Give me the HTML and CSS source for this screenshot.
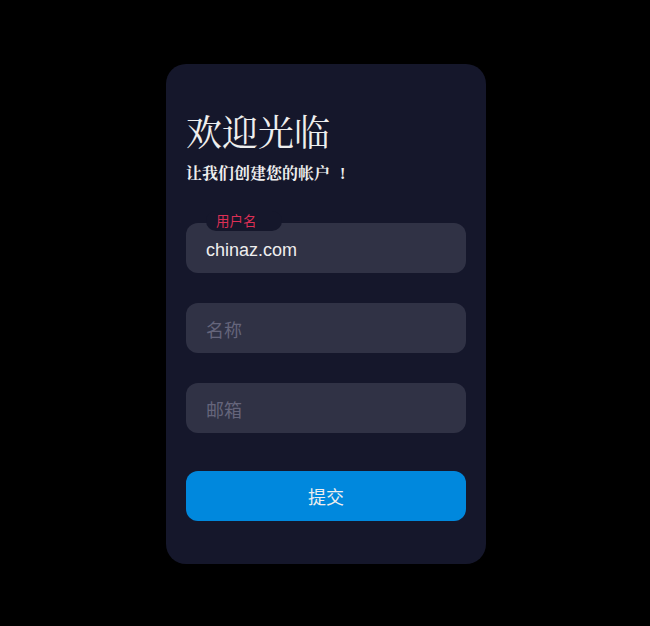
FILE: index.html
```html
<!DOCTYPE html>
<html lang="zh">
<head>
<meta charset="utf-8">
<title>欢迎光临</title>
<link rel="stylesheet" href="styles.css">
</head>
<body>
<div class="form">
  <div class="title">欢迎光临</div>
  <div class="subtitle">让我们创建您的帐户<span class="excl">!</span></div>
  <div class="input-container ic1">
    <input class="input filled" type="text" value="chinaz.com">
    <div class="cut"></div>
    <label class="placeholder raised">用户名</label>
  </div>
  <div class="input-container ic2">
    <input class="input" type="text">
    <label class="placeholder">名称</label>
  </div>
  <div class="input-container ic2">
    <input class="input" type="text">
    <label class="placeholder">邮箱</label>
  </div>
  <button class="submit" type="button">提交</button>
</div>
</body>
</html>
```

FILE: styles.css
```css
html, body {
  margin: 0;
  padding: 0;
}
body {
  background: #000;
  display: flex;
  align-items: center;
  justify-content: center;
  min-height: 100vh;
  font-family: "Liberation Sans", "Noto Sans CJK SC", sans-serif;
}
.form {
  background: #15172b;
  border-radius: 20px;
  box-sizing: border-box;
  height: 500px;
  padding: 20px;
  width: 320px;
  margin-top: 1px;
  margin-left: 2px;
}
.title {
  color: #eee;
  font-family: "Liberation Serif", "Noto Serif CJK SC", "Noto Sans CJK SC", serif;
  font-size: 36px;
  line-height: 41px;
  font-weight: 400;
  margin-top: 30px;
}
.subtitle {
  color: #eee;
  font-family: "Liberation Serif", "Noto Serif CJK SC", "Noto Sans CJK SC", serif;
  font-size: 16px;
  line-height: 18px;
  font-weight: 700;
  margin-top: 10px;
}
.excl {
  margin-left: 10px;
}
.input-container {
  height: 50px;
  position: relative;
  width: 100%;
}
.ic1 {
  margin-top: 40px;
}
.ic2 {
  margin-top: 30px;
}
.input {
  background-color: #303245;
  border-radius: 12px;
  border: 0;
  box-sizing: border-box;
  color: #eee;
  font-family: "Liberation Sans", "Noto Sans CJK SC", sans-serif;
  font-size: 18px;
  height: 100%;
  outline: 0;
  padding: 6px 20px 0;
  width: 100%;
  display: block;
}
.cut {
  background-color: #15172b;
  border-radius: 10px;
  height: 20px;
  left: 20px;
  position: absolute;
  top: -20px;
  transform: translateY(8px);
  width: 76px;
}
.placeholder {
  color: #65657b;
  font-family: "Liberation Sans", "Noto Sans CJK SC", sans-serif;
  font-size: 18px;
  left: 20px;
  line-height: 14px;
  pointer-events: none;
  position: absolute;
  transform-origin: 0 50%;
  top: 21px;
}
.placeholder.raised {
  color: #dc2f55;
  transform: translateY(-30px) translateX(10px) scale(0.75);
}
.submit {
  background-color: #08d;
  border-radius: 12px;
  border: 0;
  box-sizing: border-box;
  color: #eee;
  cursor: pointer;
  font-family: "Liberation Sans", "Noto Sans CJK SC", sans-serif;
  font-size: 18px;
  height: 50px;
  margin-top: 38px;
  text-align: center;
  width: 100%;
  display: block;
}
```
